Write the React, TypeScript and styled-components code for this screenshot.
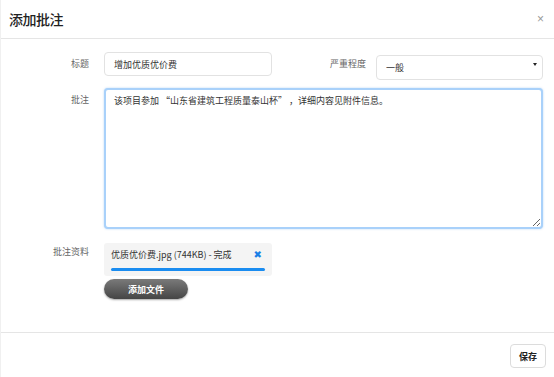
import React from "react";
import styled, { createGlobalStyle } from "styled-components";

const GlobalStyle = createGlobalStyle`
  html, body {
    margin: 0;
    padding: 0;
    background: #fff;
  }
  body {
    font-family: "Noto Sans CJK SC", "Noto Sans", "Liberation Sans", sans-serif;
    color: #333;
  }
  * {
    box-sizing: border-box;
  }
`;

const Modal = styled.div`
  width: 554px;
  height: 377px;
  display: flex;
  flex-direction: column;
  background: #fff;
  border-left: 1px solid #f0f0f0;
`;

const Header = styled.div`
  height: 39px;
  display: flex;
  align-items: center;
  justify-content: space-between;
  padding: 0 10px 0 8px;
  border-bottom: 1px solid #e5e5e5;
`;

const Title = styled.h2`
  margin: 0;
  font-size: 14px;
  font-weight: 500;
  color: #222;
  letter-spacing: -0.5px;
`;

const Close = styled.button`
  border: none;
  background: transparent;
  color: #999;
  font-size: 12px;
  padding: 0;
  cursor: pointer;
  font-family: "Liberation Sans", sans-serif;
`;

const Body = styled.div`
  flex: 1;
  display: flex;
  flex-direction: column;
  padding: 13px 11px 0 0;
`;

const Row = styled.div<{ $gap?: number }>`
  display: flex;
  align-items: flex-start;
  margin-bottom: ${(p) => p.$gap ?? 0}px;
`;

const Label = styled.label<{ $top?: number; $flex?: boolean }>`
  width: ${(p) => (p.$flex ? "auto" : "88px")};
  flex: ${(p) => (p.$flex ? 1 : "none")};
  text-align: right;
  font-size: 9px;
  color: #666;
  padding-top: ${(p) => p.$top ?? 0}px;
  margin-right: ${(p) => (p.$flex ? 10 : 15)}px;
  line-height: 12px;
`;

const TextInput = styled.input`
  width: 168px;
  height: 24px;
  border: 1px solid #e2e2e2;
  border-radius: 4px;
  padding: 0 9px;
  font-size: 9px;
  color: #333;
  font-family: inherit;
  outline: none;
`;

const SelectWrap = styled.div`
  position: relative;
  width: 167px;
  height: 25px;

  &::after {
    content: "";
    position: absolute;
    right: 6px;
    top: 11px;
    border-left: 2.5px solid transparent;
    border-right: 2.5px solid transparent;
    border-top: 3.5px solid #222;
    pointer-events: none;
  }
`;

const Select = styled.select`
  width: 100%;
  height: 100%;
  appearance: none;
  -webkit-appearance: none;
  border: 1px solid #e2e2e2;
  border-radius: 4px;
  background: #fff;
  padding: 0 9px;
  font-size: 9px;
  color: #333;
  font-family: inherit;
  outline: none;
`;

const TextArea = styled.textarea`
  flex: 1;
  height: 141px;
  border: 2px solid #a9d1fa;
  border-radius: 4px;
  box-shadow: 0 0 2px rgba(100, 170, 240, 0.5);
  padding: 5px 8px;
  font-size: 9px;
  line-height: 12px;
  color: #333;
  font-family: inherit;
  outline: none;
  resize: both;
`;

const Attach = styled.div`
  display: flex;
  flex-direction: column;
  gap: 3px;
`;

const FileBox = styled.div`
  width: 168px;
  height: 33px;
  background: #f4f4f4;
  border-radius: 3px;
  padding: 6px 7px 0 7px;
`;

const FileLine = styled.div`
  display: flex;
  justify-content: space-between;
  align-items: center;
  font-size: 9px;
  line-height: 12px;
  color: #333;
  padding-right: 3px;
`;

const Remove = styled.span`
  color: #1a7fe6;
  font-size: 10px;
  font-weight: 700;
  font-family: "DejaVu Sans", sans-serif;
`;

const Progress = styled.div`
  margin-top: 7px;
  height: 3px;
  border-radius: 2px;
  background: #1a8cf0;
`;

const DarkButton = styled.button`
  width: 84px;
  height: 20px;
  border: none;
  border-radius: 10px;
  background: linear-gradient(#7a7a7a, #454545);
  box-shadow: 0 1px 2px rgba(0, 0, 0, 0.35);
  color: #fff;
  font-size: 9px;
  font-weight: 700;
  font-family: inherit;
  cursor: pointer;
`;

const Footer = styled.div`
  height: 45px;
  border-top: 1px solid #e5e5e5;
  display: flex;
  align-items: flex-start;
  justify-content: flex-end;
  padding: 11px 8px 0 0;
`;

const SaveButton = styled.button`
  width: 36px;
  height: 24px;
  border: 1px solid #dcdcdc;
  border-radius: 4px;
  background: #fff;
  color: #222;
  font-size: 9px;
  font-weight: 700;
  font-family: inherit;
  cursor: pointer;
`;

export default function App() {
  return (
    <>
      <GlobalStyle />
      <Modal>
        <Header>
          <Title>添加批注</Title>
          <Close>×</Close>
        </Header>
        <Body>
          <Row $gap={11}>
            <Label $top={6}>标题</Label>
            <TextInput defaultValue="增加优质优价费" />
            <Label $flex $top={6}>严重程度</Label>
            <SelectWrap>
              <Select defaultValue="一般">
                <option>一般</option>
                <option>严重</option>
              </Select>
            </SelectWrap>
          </Row>
          <Row $gap={14}>
            <Label $top={6}>批注</Label>
            <TextArea defaultValue="该项目参加 “山东省建筑工程质量泰山杯” ，详细内容见附件信息。" />
          </Row>
          <Row>
            <Label $top={3}>批注资料</Label>
            <Attach>
              <FileBox>
                <FileLine>
                  <span>优质优价费.jpg (744KB) - 完成</span>
                  <Remove>✖</Remove>
                </FileLine>
                <Progress />
              </FileBox>
              <DarkButton>添加文件</DarkButton>
            </Attach>
          </Row>
        </Body>
        <Footer>
          <SaveButton>保存</SaveButton>
        </Footer>
      </Modal>
    </>
  );
}
